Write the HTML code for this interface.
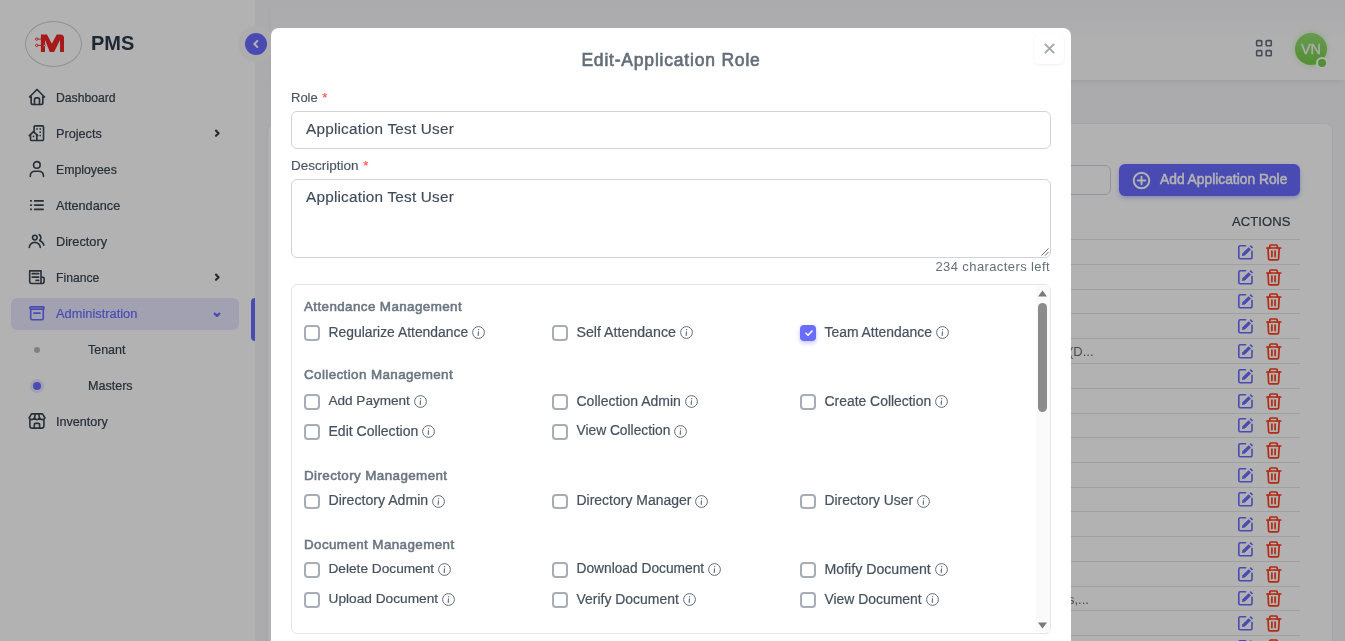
<!DOCTYPE html>
<html><head><meta charset="utf-8">
<style>
*{box-sizing:border-box;margin:0;padding:0}
html,body{width:1345px;height:641px;overflow:hidden}
body{position:relative;background:#f5f5f9;font-family:"Liberation Sans",sans-serif;color:#384551}
#root{position:absolute;left:0;top:0;width:1345px;height:641px;overflow:hidden;will-change:transform;background:#f5f5f9}
.abs{position:absolute}
/* sidebar */
#side{left:0;top:0;width:255px;height:641px;background:#fff}
.logo{left:25px;top:21px;width:57px;height:46px;border:1px solid #d0d0d0;border-radius:50%}
.pms{left:91px;top:33px;font-size:20px;font-weight:bold;color:#2c3a4a;line-height:20px}
.mi{left:0;width:255px;height:32px;font-size:12.2px;color:#384551;line-height:32px;-webkit-text-stroke-width:0.2px}
.mi svg{position:absolute;left:27px;top:6px;width:20px;height:20px}
.mi span{position:absolute;left:56px;top:1px}
.mi .chev{position:absolute;left:212px;top:11px;width:10px;height:10px;stroke-width:2.2}
.act{left:11px;top:298px;width:228px;height:32px;border-radius:6px;background:rgba(105,108,255,0.16)}
/* navbar */
#nav{left:271px;top:0;width:1074px;height:80px;background:linear-gradient(#f5f5f9 0px,#f6f6f9 14px,#fcfcfd 40px);box-shadow:0 4px 6px -2px rgba(0,0,0,0.07)}
/* card */
#card{left:268px;top:124px;width:1064px;height:560px;background:#fff;border-radius:6px;box-shadow:0 0 2px rgba(0,0,0,0.12)}
#overlay{left:0;top:0;width:1345px;height:641px;background:rgba(0,0,0,0.3)}
/* modal */
#modal{left:271px;top:28px;width:800px;height:700px;background:#fff;border-radius:8px}
.lbl{font-size:13px;color:#4a5562;line-height:16px;-webkit-text-stroke-width:0.15px}
.req{color:#ff4d49;margin-left:1px}
.inp{border:1px solid #d0d4d9;border-radius:6px;background:#fff}
.inptxt{font-size:15.3px;letter-spacing:0.22px;color:#3f4b59;line-height:18px;-webkit-text-stroke-width:0.15px}
.sec{font-size:13.4px;font-weight:normal;color:#6a7581;line-height:16px;-webkit-text-stroke-width:0.55px;letter-spacing:0.4px}
.cb{width:16px;height:15.6px;border:2px solid #a6adb5;border-radius:4px;background:#fff}
.cbl{font-size:14px;color:#45515e;line-height:16px;white-space:nowrap;-webkit-text-stroke-width:0.2px}
.info{display:inline-block;width:13px;height:13px;vertical-align:-2px;margin-left:3px}
</style></head>
<body>
<div id="root">
<div id="side" class="abs">
  <div class="abs logo"></div>
  <svg class="abs" style="left:34px;top:33px" width="32" height="21" viewBox="0 0 32 21">
    <path d="M6.9 1.5H13L17.9 10.8L22.7 1.5H26.5Q30 1.5 30 5V19.1H26V7L20.1 19.1H15.8L11 7V19.1H6.9Z" fill="#f02626"/>
    <path d="M3.6 6.1H7.5M3.6 12.4H9.5" stroke="#f02626" stroke-width="0.9"/>
    <circle cx="2.7" cy="6.1" r="1.2" fill="none" stroke="#f02626" stroke-width="0.9"/>
    <circle cx="2.7" cy="12.4" r="1.2" fill="none" stroke="#f02626" stroke-width="0.9"/>
    <circle cx="10.4" cy="12.4" r="1" fill="#fff" stroke="#f02626" stroke-width="0.7"/>
  </svg>
  <div class="abs pms">PMS</div>

  <div class="abs act"></div>
  <div class="abs" style="left:251px;top:298px;width:4px;height:43px;background:#696cff;border-radius:4px 0 0 4px"></div>

  <div class="abs mi" style="top:81px">
    <svg viewBox="0 0 24 24" fill="none" stroke="#384551" stroke-width="2" stroke-linecap="round" stroke-linejoin="round"><path d="M5 12H3l9-9 9 9h-2"/><path d="M5 12v7a2 2 0 0 0 2 2h10a2 2 0 0 0 2-2v-7"/><path d="M9 21v-6a2 2 0 0 1 2-2h2a2 2 0 0 1 2 2v6"/></svg>
    <span>Dashboard</span></div>
  <div class="abs mi" style="top:117px">
    <svg viewBox="0 0 20 20" fill="none" stroke="#384551" stroke-width="1.6" stroke-linecap="round" stroke-linejoin="round"><path d="M7.1 8.8V3.9Q7.1 2.9 8.1 2.9H15.5Q16.5 2.9 16.5 3.9V16.5Q16.5 17.5 15.5 17.5H4.5Q3.5 17.5 3.5 16.5V12.4"/><path d="M2.3 12.6L6.5 8.6L10.7 12.6"/><path d="M9.8 12V17.3"/><path d="M10 5.9h.01M13.2 5.9h.01M13.2 9.2h.01M13.2 12.6h.01M6.5 13.4h.01" stroke-width="1.7"/></svg>
    <span style="font-size:12.7px">Projects</span>
    <svg class="chev" viewBox="0 0 10 10" fill="none" stroke="#384551" stroke-width="2" stroke-linecap="round" stroke-linejoin="round"><path d="M4 2.6l2.6 2.6-2.6 2.6"/></svg></div>
  <div class="abs mi" style="top:153px">
    <svg viewBox="0 0 20 20" fill="none" stroke="#384551" stroke-width="1.6" stroke-linecap="round" stroke-linejoin="round"><circle cx="9.85" cy="5.95" r="3.3"/><path d="M3.3 17.5V16.9Q3.3 12.2 8.2 12.2H11.5Q16.5 12.2 16.5 16.9V17.5"/></svg>
    <span style="font-size:12.3px">Employees</span></div>
  <div class="abs mi" style="top:189px">
    <svg viewBox="0 0 20 20" fill="none" stroke="#384551" stroke-width="1.6" stroke-linecap="round" stroke-linejoin="round"><path d="M7.7 5.9H16.1M7.7 10.1H16.1M7.7 14.4H16.1" stroke-width="1.7"/><path d="M4 5.9h.01M4 10.1h.01M4 14.4h.01" stroke-width="1.8" stroke-linecap="square"/></svg>
    <span style="font-size:12.7px">Attendance</span></div>
  <div class="abs mi" style="top:225px">
    <svg viewBox="0 0 20 20" fill="none" stroke="#384551" stroke-width="1.6" stroke-linecap="round" stroke-linejoin="round"><circle cx="7.85" cy="6.6" r="2.3"/><path d="M2.3 16.5A5.5 5.1 0 0 1 13.3 16.5"/><path d="M12.4 3.6Q15.3 6.6 12.6 9.5Q16.2 11 16.8 14.2"/></svg>
    <span style="font-size:12.75px">Directory</span></div>
  <div class="abs mi" style="top:261px">
    <svg viewBox="0 0 20 20" fill="none" stroke="#384551" stroke-width="1.6" stroke-linecap="round" stroke-linejoin="round"><path d="M14 16.5V3.9H2.7V14.5Q2.7 16.5 4.7 16.5H15.1Q17.1 16.5 17.1 14.5V11.2Q17.1 10.2 16.1 10.2H14"/><path d="M5.3 6.7H11.6M5.3 10.2H11.6M9.2 13.4H11.6" stroke-width="1.7"/></svg>
    <span style="font-size:12.2px">Finance</span>
    <svg class="chev" viewBox="0 0 10 10" fill="none" stroke="#384551" stroke-width="2" stroke-linecap="round" stroke-linejoin="round"><path d="M4 2.6l2.6 2.6-2.6 2.6"/></svg></div>
  <div class="abs mi" style="top:297px;color:#696cff">
    <svg viewBox="0 0 20 20" fill="none" stroke="#696cff" stroke-width="1.6" stroke-linecap="round" stroke-linejoin="round"><path d="M2.9 4.9Q2.9 3.9 3.9 3.9H16.1Q17.1 3.9 17.1 4.9V5.1Q17.1 6.1 16.1 6.1H3.9Q2.9 6.1 2.9 5.1Z"/><path d="M3.7 6.1V15.2Q3.7 16.7 5.2 16.7H14.8Q16.3 16.7 16.3 15.2V6.1"/><path d="M6.9 10.2H13" stroke-width="1.7"/></svg>
    <span style="font-size:12.85px">Administration</span>
    <svg class="chev" viewBox="0 0 10 10" fill="none" stroke="#696cff" stroke-width="2.1" stroke-linecap="round" stroke-linejoin="round"><path d="M2.7 5.6l2.3 2.3 2.3-2.3"/></svg></div>
  <div class="abs" style="left:34px;top:347px;width:6px;height:6px;border-radius:50%;background:#b7b7b7"></div>
  <div class="abs mi" style="top:333px"><span style="left:88px;font-size:12.45px">Tenant</span></div>
  <div class="abs" style="left:30px;top:379px;width:14px;height:14px;border-radius:50%;background:rgba(105,108,255,0.16)"></div>
  <div class="abs" style="left:33px;top:382px;width:8px;height:8px;border-radius:50%;background:#696cff"></div>
  <div class="abs mi" style="top:369px"><span style="left:88px;font-size:12.55px">Masters</span></div>
  <div class="abs mi" style="top:405px">
    <svg viewBox="0 0 20 20" fill="none" stroke="#384551" stroke-width="1.6" stroke-linecap="round" stroke-linejoin="round"><path d="M4.5 2.9H15.5L18 7Q15.2 10.3 12.5 7Q10 10.3 7.5 7Q4.8 10.3 2.1 7Z"/><path d="M7.5 7L8.3 2.9M12.5 7L11.7 2.9"/><path d="M2.9 8.8V15.1Q2.9 17.1 4.9 17.1H14.9Q16.9 17.1 16.9 15.1V8.8"/><path d="M7.3 17.1V13.4Q7.3 12.4 8.3 12.4H11.6Q12.6 12.4 12.6 13.4V17.1"/></svg>
    <span style="font-size:12.6px">Inventory</span></div>
</div>

<div id="nav" class="abs"></div>
<!-- toggle -->
<div class="abs" style="left:238px;top:26px;width:36px;height:36px;border-radius:50%;background:#f8f8fa"></div>
<div class="abs" style="left:245px;top:33px;width:22px;height:22px;border-radius:50%;background:#696cff"></div>
<svg class="abs" style="left:250px;top:38px" width="12" height="12" viewBox="0 0 12 12" fill="none" stroke="#fff" stroke-width="2" stroke-linecap="round" stroke-linejoin="round"><path d="M7.3 3l-3 3 3 3"/></svg>

<!-- grid icon -->
<svg class="abs" style="left:1255px;top:39px" width="18" height="19" viewBox="0 0 18 19" fill="none" stroke="#646e78" stroke-width="1.6"><rect x="1.65" y="1.65" width="5.1" height="5.1" rx="0.8"/><rect x="11.15" y="1.65" width="5.1" height="5.1" rx="0.8"/><rect x="1.65" y="11.65" width="5.1" height="5.1" rx="0.8"/><rect x="11.15" y="11.65" width="5.1" height="5.1" rx="0.8"/></svg>
<div class="abs" style="left:1295px;top:33px;width:32px;height:32px;border-radius:50%;background:linear-gradient(#94dc72,#76cc48);color:#f4f4f4;font-size:14.5px;line-height:32px;text-align:center;-webkit-text-stroke-width:0.4px;box-shadow:0 0 6px rgba(113,221,55,0.35)">VN</div>
<div class="abs" style="left:1316px;top:57px;width:12px;height:12px;border-radius:50%;background:#76cc48;border:2px solid #fff"></div>

<div id="card" class="abs">
  <div class="abs" style="left:752px;top:41px;width:91px;height:30px;border:1px solid #d1d5db;border-radius:6px;background:#fff"></div>
  <div class="abs" style="left:851px;top:40px;width:181px;height:32px;border-radius:6px;background:#696cff;box-shadow:0 2px 4px rgba(105,108,255,0.4)">
    <svg class="abs" style="left:13px;top:6.5px" width="19" height="19" viewBox="0 0 24 24" fill="none" stroke="#fff" stroke-width="2.5" stroke-linecap="round"><circle cx="12" cy="12" r="9.8"/><path d="M7.3 12h9.4M12 7.3v9.4"/></svg>
    <div class="abs" style="left:41px;top:8px;font-size:13.8px;font-weight:normal;-webkit-text-stroke-width:0.5px;color:#fff;line-height:16px;white-space:nowrap">Add Application Role</div>
  </div>
  <div class="abs" style="left:964px;top:90px;font-size:13px;color:#384551;line-height:16px;letter-spacing:0.1px;-webkit-text-stroke-width:0.2px">ACTIONS</div>
  <div class="abs" style="left:762px;top:115px;width:270px;height:1px;background:#e4e6e8"></div>
  <div class="abs" style="left:762px;top:140px;width:270px;height:1px;background:#e4e6e8"></div>
<div class="abs" style="left:762px;top:165px;width:270px;height:1px;background:#e4e6e8"></div>
<div class="abs" style="left:762px;top:189px;width:270px;height:1px;background:#e4e6e8"></div>
<div class="abs" style="left:762px;top:214px;width:270px;height:1px;background:#e4e6e8"></div>
<div class="abs" style="left:762px;top:239px;width:270px;height:1px;background:#e4e6e8"></div>
<div class="abs" style="left:762px;top:264px;width:270px;height:1px;background:#e4e6e8"></div>
<div class="abs" style="left:762px;top:289px;width:270px;height:1px;background:#e4e6e8"></div>
<div class="abs" style="left:762px;top:313px;width:270px;height:1px;background:#e4e6e8"></div>
<div class="abs" style="left:762px;top:338px;width:270px;height:1px;background:#e4e6e8"></div>
<div class="abs" style="left:762px;top:363px;width:270px;height:1px;background:#e4e6e8"></div>
<div class="abs" style="left:762px;top:387px;width:270px;height:1px;background:#e4e6e8"></div>
<div class="abs" style="left:762px;top:412px;width:270px;height:1px;background:#e4e6e8"></div>
<div class="abs" style="left:762px;top:437px;width:270px;height:1px;background:#e4e6e8"></div>
<div class="abs" style="left:762px;top:462px;width:270px;height:1px;background:#e4e6e8"></div>
<div class="abs" style="left:762px;top:486px;width:270px;height:1px;background:#e4e6e8"></div>
<div class="abs" style="left:762px;top:511px;width:270px;height:1px;background:#e4e6e8"></div>
<svg class="abs" style="left:970px;top:120px" width="16" height="16" viewBox="0 0 16 16"><path d="M7.6 1.7H2.3a1.5 1.5 0 0 0-1.5 1.5V13.3a1.5 1.5 0 0 0 1.5 1.5H12.5a1.5 1.5 0 0 0 1.5-1.5V7.3" fill="none" stroke="#696cff" stroke-width="1.6" stroke-linecap="round"/><path d="M3.9 12L4.5 9.3L10.6 3.3L13 5.6L6.9 11.6Z" fill="#696cff"/><path d="M11.6 2.3L12.8 1.1L15.1 3.4L13.9 4.6Z" fill="#696cff"/></svg>
<svg class="abs" style="left:997px;top:120px" width="17" height="17" viewBox="0 0 17 17" fill="none" stroke="#ff3e1d" stroke-width="1.7" stroke-linecap="round" stroke-linejoin="round"><path d="M1.8 4h14"/><path d="M3 4.2l0.6 10.6a1.2 1.2 0 0 0 1.2 1.1h7.6a1.2 1.2 0 0 0 1.2-1.1l0.6-10.6"/><path d="M4.8 4V1.9a0.9 0.9 0 0 1 0.9-0.9h5.6a0.9 0.9 0 0 1 0.9 0.9V4"/><path d="M6.9 7v5.6M10.1 7v5.6"/></svg>
<svg class="abs" style="left:970px;top:145px" width="16" height="16" viewBox="0 0 16 16"><path d="M7.6 1.7H2.3a1.5 1.5 0 0 0-1.5 1.5V13.3a1.5 1.5 0 0 0 1.5 1.5H12.5a1.5 1.5 0 0 0 1.5-1.5V7.3" fill="none" stroke="#696cff" stroke-width="1.6" stroke-linecap="round"/><path d="M3.9 12L4.5 9.3L10.6 3.3L13 5.6L6.9 11.6Z" fill="#696cff"/><path d="M11.6 2.3L12.8 1.1L15.1 3.4L13.9 4.6Z" fill="#696cff"/></svg>
<svg class="abs" style="left:997px;top:145px" width="17" height="17" viewBox="0 0 17 17" fill="none" stroke="#ff3e1d" stroke-width="1.7" stroke-linecap="round" stroke-linejoin="round"><path d="M1.8 4h14"/><path d="M3 4.2l0.6 10.6a1.2 1.2 0 0 0 1.2 1.1h7.6a1.2 1.2 0 0 0 1.2-1.1l0.6-10.6"/><path d="M4.8 4V1.9a0.9 0.9 0 0 1 0.9-0.9h5.6a0.9 0.9 0 0 1 0.9 0.9V4"/><path d="M6.9 7v5.6M10.1 7v5.6"/></svg>
<svg class="abs" style="left:970px;top:169px" width="16" height="16" viewBox="0 0 16 16"><path d="M7.6 1.7H2.3a1.5 1.5 0 0 0-1.5 1.5V13.3a1.5 1.5 0 0 0 1.5 1.5H12.5a1.5 1.5 0 0 0 1.5-1.5V7.3" fill="none" stroke="#696cff" stroke-width="1.6" stroke-linecap="round"/><path d="M3.9 12L4.5 9.3L10.6 3.3L13 5.6L6.9 11.6Z" fill="#696cff"/><path d="M11.6 2.3L12.8 1.1L15.1 3.4L13.9 4.6Z" fill="#696cff"/></svg>
<svg class="abs" style="left:997px;top:169px" width="17" height="17" viewBox="0 0 17 17" fill="none" stroke="#ff3e1d" stroke-width="1.7" stroke-linecap="round" stroke-linejoin="round"><path d="M1.8 4h14"/><path d="M3 4.2l0.6 10.6a1.2 1.2 0 0 0 1.2 1.1h7.6a1.2 1.2 0 0 0 1.2-1.1l0.6-10.6"/><path d="M4.8 4V1.9a0.9 0.9 0 0 1 0.9-0.9h5.6a0.9 0.9 0 0 1 0.9 0.9V4"/><path d="M6.9 7v5.6M10.1 7v5.6"/></svg>
<svg class="abs" style="left:970px;top:194px" width="16" height="16" viewBox="0 0 16 16"><path d="M7.6 1.7H2.3a1.5 1.5 0 0 0-1.5 1.5V13.3a1.5 1.5 0 0 0 1.5 1.5H12.5a1.5 1.5 0 0 0 1.5-1.5V7.3" fill="none" stroke="#696cff" stroke-width="1.6" stroke-linecap="round"/><path d="M3.9 12L4.5 9.3L10.6 3.3L13 5.6L6.9 11.6Z" fill="#696cff"/><path d="M11.6 2.3L12.8 1.1L15.1 3.4L13.9 4.6Z" fill="#696cff"/></svg>
<svg class="abs" style="left:997px;top:194px" width="17" height="17" viewBox="0 0 17 17" fill="none" stroke="#ff3e1d" stroke-width="1.7" stroke-linecap="round" stroke-linejoin="round"><path d="M1.8 4h14"/><path d="M3 4.2l0.6 10.6a1.2 1.2 0 0 0 1.2 1.1h7.6a1.2 1.2 0 0 0 1.2-1.1l0.6-10.6"/><path d="M4.8 4V1.9a0.9 0.9 0 0 1 0.9-0.9h5.6a0.9 0.9 0 0 1 0.9 0.9V4"/><path d="M6.9 7v5.6M10.1 7v5.6"/></svg>
<svg class="abs" style="left:970px;top:219px" width="16" height="16" viewBox="0 0 16 16"><path d="M7.6 1.7H2.3a1.5 1.5 0 0 0-1.5 1.5V13.3a1.5 1.5 0 0 0 1.5 1.5H12.5a1.5 1.5 0 0 0 1.5-1.5V7.3" fill="none" stroke="#696cff" stroke-width="1.6" stroke-linecap="round"/><path d="M3.9 12L4.5 9.3L10.6 3.3L13 5.6L6.9 11.6Z" fill="#696cff"/><path d="M11.6 2.3L12.8 1.1L15.1 3.4L13.9 4.6Z" fill="#696cff"/></svg>
<svg class="abs" style="left:997px;top:219px" width="17" height="17" viewBox="0 0 17 17" fill="none" stroke="#ff3e1d" stroke-width="1.7" stroke-linecap="round" stroke-linejoin="round"><path d="M1.8 4h14"/><path d="M3 4.2l0.6 10.6a1.2 1.2 0 0 0 1.2 1.1h7.6a1.2 1.2 0 0 0 1.2-1.1l0.6-10.6"/><path d="M4.8 4V1.9a0.9 0.9 0 0 1 0.9-0.9h5.6a0.9 0.9 0 0 1 0.9 0.9V4"/><path d="M6.9 7v5.6M10.1 7v5.6"/></svg>
<svg class="abs" style="left:970px;top:244px" width="16" height="16" viewBox="0 0 16 16"><path d="M7.6 1.7H2.3a1.5 1.5 0 0 0-1.5 1.5V13.3a1.5 1.5 0 0 0 1.5 1.5H12.5a1.5 1.5 0 0 0 1.5-1.5V7.3" fill="none" stroke="#696cff" stroke-width="1.6" stroke-linecap="round"/><path d="M3.9 12L4.5 9.3L10.6 3.3L13 5.6L6.9 11.6Z" fill="#696cff"/><path d="M11.6 2.3L12.8 1.1L15.1 3.4L13.9 4.6Z" fill="#696cff"/></svg>
<svg class="abs" style="left:997px;top:244px" width="17" height="17" viewBox="0 0 17 17" fill="none" stroke="#ff3e1d" stroke-width="1.7" stroke-linecap="round" stroke-linejoin="round"><path d="M1.8 4h14"/><path d="M3 4.2l0.6 10.6a1.2 1.2 0 0 0 1.2 1.1h7.6a1.2 1.2 0 0 0 1.2-1.1l0.6-10.6"/><path d="M4.8 4V1.9a0.9 0.9 0 0 1 0.9-0.9h5.6a0.9 0.9 0 0 1 0.9 0.9V4"/><path d="M6.9 7v5.6M10.1 7v5.6"/></svg>
<svg class="abs" style="left:970px;top:269px" width="16" height="16" viewBox="0 0 16 16"><path d="M7.6 1.7H2.3a1.5 1.5 0 0 0-1.5 1.5V13.3a1.5 1.5 0 0 0 1.5 1.5H12.5a1.5 1.5 0 0 0 1.5-1.5V7.3" fill="none" stroke="#696cff" stroke-width="1.6" stroke-linecap="round"/><path d="M3.9 12L4.5 9.3L10.6 3.3L13 5.6L6.9 11.6Z" fill="#696cff"/><path d="M11.6 2.3L12.8 1.1L15.1 3.4L13.9 4.6Z" fill="#696cff"/></svg>
<svg class="abs" style="left:997px;top:269px" width="17" height="17" viewBox="0 0 17 17" fill="none" stroke="#ff3e1d" stroke-width="1.7" stroke-linecap="round" stroke-linejoin="round"><path d="M1.8 4h14"/><path d="M3 4.2l0.6 10.6a1.2 1.2 0 0 0 1.2 1.1h7.6a1.2 1.2 0 0 0 1.2-1.1l0.6-10.6"/><path d="M4.8 4V1.9a0.9 0.9 0 0 1 0.9-0.9h5.6a0.9 0.9 0 0 1 0.9 0.9V4"/><path d="M6.9 7v5.6M10.1 7v5.6"/></svg>
<svg class="abs" style="left:970px;top:293px" width="16" height="16" viewBox="0 0 16 16"><path d="M7.6 1.7H2.3a1.5 1.5 0 0 0-1.5 1.5V13.3a1.5 1.5 0 0 0 1.5 1.5H12.5a1.5 1.5 0 0 0 1.5-1.5V7.3" fill="none" stroke="#696cff" stroke-width="1.6" stroke-linecap="round"/><path d="M3.9 12L4.5 9.3L10.6 3.3L13 5.6L6.9 11.6Z" fill="#696cff"/><path d="M11.6 2.3L12.8 1.1L15.1 3.4L13.9 4.6Z" fill="#696cff"/></svg>
<svg class="abs" style="left:997px;top:293px" width="17" height="17" viewBox="0 0 17 17" fill="none" stroke="#ff3e1d" stroke-width="1.7" stroke-linecap="round" stroke-linejoin="round"><path d="M1.8 4h14"/><path d="M3 4.2l0.6 10.6a1.2 1.2 0 0 0 1.2 1.1h7.6a1.2 1.2 0 0 0 1.2-1.1l0.6-10.6"/><path d="M4.8 4V1.9a0.9 0.9 0 0 1 0.9-0.9h5.6a0.9 0.9 0 0 1 0.9 0.9V4"/><path d="M6.9 7v5.6M10.1 7v5.6"/></svg>
<svg class="abs" style="left:970px;top:318px" width="16" height="16" viewBox="0 0 16 16"><path d="M7.6 1.7H2.3a1.5 1.5 0 0 0-1.5 1.5V13.3a1.5 1.5 0 0 0 1.5 1.5H12.5a1.5 1.5 0 0 0 1.5-1.5V7.3" fill="none" stroke="#696cff" stroke-width="1.6" stroke-linecap="round"/><path d="M3.9 12L4.5 9.3L10.6 3.3L13 5.6L6.9 11.6Z" fill="#696cff"/><path d="M11.6 2.3L12.8 1.1L15.1 3.4L13.9 4.6Z" fill="#696cff"/></svg>
<svg class="abs" style="left:997px;top:318px" width="17" height="17" viewBox="0 0 17 17" fill="none" stroke="#ff3e1d" stroke-width="1.7" stroke-linecap="round" stroke-linejoin="round"><path d="M1.8 4h14"/><path d="M3 4.2l0.6 10.6a1.2 1.2 0 0 0 1.2 1.1h7.6a1.2 1.2 0 0 0 1.2-1.1l0.6-10.6"/><path d="M4.8 4V1.9a0.9 0.9 0 0 1 0.9-0.9h5.6a0.9 0.9 0 0 1 0.9 0.9V4"/><path d="M6.9 7v5.6M10.1 7v5.6"/></svg>
<svg class="abs" style="left:970px;top:343px" width="16" height="16" viewBox="0 0 16 16"><path d="M7.6 1.7H2.3a1.5 1.5 0 0 0-1.5 1.5V13.3a1.5 1.5 0 0 0 1.5 1.5H12.5a1.5 1.5 0 0 0 1.5-1.5V7.3" fill="none" stroke="#696cff" stroke-width="1.6" stroke-linecap="round"/><path d="M3.9 12L4.5 9.3L10.6 3.3L13 5.6L6.9 11.6Z" fill="#696cff"/><path d="M11.6 2.3L12.8 1.1L15.1 3.4L13.9 4.6Z" fill="#696cff"/></svg>
<svg class="abs" style="left:997px;top:343px" width="17" height="17" viewBox="0 0 17 17" fill="none" stroke="#ff3e1d" stroke-width="1.7" stroke-linecap="round" stroke-linejoin="round"><path d="M1.8 4h14"/><path d="M3 4.2l0.6 10.6a1.2 1.2 0 0 0 1.2 1.1h7.6a1.2 1.2 0 0 0 1.2-1.1l0.6-10.6"/><path d="M4.8 4V1.9a0.9 0.9 0 0 1 0.9-0.9h5.6a0.9 0.9 0 0 1 0.9 0.9V4"/><path d="M6.9 7v5.6M10.1 7v5.6"/></svg>
<svg class="abs" style="left:970px;top:367px" width="16" height="16" viewBox="0 0 16 16"><path d="M7.6 1.7H2.3a1.5 1.5 0 0 0-1.5 1.5V13.3a1.5 1.5 0 0 0 1.5 1.5H12.5a1.5 1.5 0 0 0 1.5-1.5V7.3" fill="none" stroke="#696cff" stroke-width="1.6" stroke-linecap="round"/><path d="M3.9 12L4.5 9.3L10.6 3.3L13 5.6L6.9 11.6Z" fill="#696cff"/><path d="M11.6 2.3L12.8 1.1L15.1 3.4L13.9 4.6Z" fill="#696cff"/></svg>
<svg class="abs" style="left:997px;top:367px" width="17" height="17" viewBox="0 0 17 17" fill="none" stroke="#ff3e1d" stroke-width="1.7" stroke-linecap="round" stroke-linejoin="round"><path d="M1.8 4h14"/><path d="M3 4.2l0.6 10.6a1.2 1.2 0 0 0 1.2 1.1h7.6a1.2 1.2 0 0 0 1.2-1.1l0.6-10.6"/><path d="M4.8 4V1.9a0.9 0.9 0 0 1 0.9-0.9h5.6a0.9 0.9 0 0 1 0.9 0.9V4"/><path d="M6.9 7v5.6M10.1 7v5.6"/></svg>
<svg class="abs" style="left:970px;top:392px" width="16" height="16" viewBox="0 0 16 16"><path d="M7.6 1.7H2.3a1.5 1.5 0 0 0-1.5 1.5V13.3a1.5 1.5 0 0 0 1.5 1.5H12.5a1.5 1.5 0 0 0 1.5-1.5V7.3" fill="none" stroke="#696cff" stroke-width="1.6" stroke-linecap="round"/><path d="M3.9 12L4.5 9.3L10.6 3.3L13 5.6L6.9 11.6Z" fill="#696cff"/><path d="M11.6 2.3L12.8 1.1L15.1 3.4L13.9 4.6Z" fill="#696cff"/></svg>
<svg class="abs" style="left:997px;top:392px" width="17" height="17" viewBox="0 0 17 17" fill="none" stroke="#ff3e1d" stroke-width="1.7" stroke-linecap="round" stroke-linejoin="round"><path d="M1.8 4h14"/><path d="M3 4.2l0.6 10.6a1.2 1.2 0 0 0 1.2 1.1h7.6a1.2 1.2 0 0 0 1.2-1.1l0.6-10.6"/><path d="M4.8 4V1.9a0.9 0.9 0 0 1 0.9-0.9h5.6a0.9 0.9 0 0 1 0.9 0.9V4"/><path d="M6.9 7v5.6M10.1 7v5.6"/></svg>
<svg class="abs" style="left:970px;top:417px" width="16" height="16" viewBox="0 0 16 16"><path d="M7.6 1.7H2.3a1.5 1.5 0 0 0-1.5 1.5V13.3a1.5 1.5 0 0 0 1.5 1.5H12.5a1.5 1.5 0 0 0 1.5-1.5V7.3" fill="none" stroke="#696cff" stroke-width="1.6" stroke-linecap="round"/><path d="M3.9 12L4.5 9.3L10.6 3.3L13 5.6L6.9 11.6Z" fill="#696cff"/><path d="M11.6 2.3L12.8 1.1L15.1 3.4L13.9 4.6Z" fill="#696cff"/></svg>
<svg class="abs" style="left:997px;top:417px" width="17" height="17" viewBox="0 0 17 17" fill="none" stroke="#ff3e1d" stroke-width="1.7" stroke-linecap="round" stroke-linejoin="round"><path d="M1.8 4h14"/><path d="M3 4.2l0.6 10.6a1.2 1.2 0 0 0 1.2 1.1h7.6a1.2 1.2 0 0 0 1.2-1.1l0.6-10.6"/><path d="M4.8 4V1.9a0.9 0.9 0 0 1 0.9-0.9h5.6a0.9 0.9 0 0 1 0.9 0.9V4"/><path d="M6.9 7v5.6M10.1 7v5.6"/></svg>
<svg class="abs" style="left:970px;top:442px" width="16" height="16" viewBox="0 0 16 16"><path d="M7.6 1.7H2.3a1.5 1.5 0 0 0-1.5 1.5V13.3a1.5 1.5 0 0 0 1.5 1.5H12.5a1.5 1.5 0 0 0 1.5-1.5V7.3" fill="none" stroke="#696cff" stroke-width="1.6" stroke-linecap="round"/><path d="M3.9 12L4.5 9.3L10.6 3.3L13 5.6L6.9 11.6Z" fill="#696cff"/><path d="M11.6 2.3L12.8 1.1L15.1 3.4L13.9 4.6Z" fill="#696cff"/></svg>
<svg class="abs" style="left:997px;top:442px" width="17" height="17" viewBox="0 0 17 17" fill="none" stroke="#ff3e1d" stroke-width="1.7" stroke-linecap="round" stroke-linejoin="round"><path d="M1.8 4h14"/><path d="M3 4.2l0.6 10.6a1.2 1.2 0 0 0 1.2 1.1h7.6a1.2 1.2 0 0 0 1.2-1.1l0.6-10.6"/><path d="M4.8 4V1.9a0.9 0.9 0 0 1 0.9-0.9h5.6a0.9 0.9 0 0 1 0.9 0.9V4"/><path d="M6.9 7v5.6M10.1 7v5.6"/></svg>
<svg class="abs" style="left:970px;top:466px" width="16" height="16" viewBox="0 0 16 16"><path d="M7.6 1.7H2.3a1.5 1.5 0 0 0-1.5 1.5V13.3a1.5 1.5 0 0 0 1.5 1.5H12.5a1.5 1.5 0 0 0 1.5-1.5V7.3" fill="none" stroke="#696cff" stroke-width="1.6" stroke-linecap="round"/><path d="M3.9 12L4.5 9.3L10.6 3.3L13 5.6L6.9 11.6Z" fill="#696cff"/><path d="M11.6 2.3L12.8 1.1L15.1 3.4L13.9 4.6Z" fill="#696cff"/></svg>
<svg class="abs" style="left:997px;top:466px" width="17" height="17" viewBox="0 0 17 17" fill="none" stroke="#ff3e1d" stroke-width="1.7" stroke-linecap="round" stroke-linejoin="round"><path d="M1.8 4h14"/><path d="M3 4.2l0.6 10.6a1.2 1.2 0 0 0 1.2 1.1h7.6a1.2 1.2 0 0 0 1.2-1.1l0.6-10.6"/><path d="M4.8 4V1.9a0.9 0.9 0 0 1 0.9-0.9h5.6a0.9 0.9 0 0 1 0.9 0.9V4"/><path d="M6.9 7v5.6M10.1 7v5.6"/></svg>
<svg class="abs" style="left:970px;top:491px" width="16" height="16" viewBox="0 0 16 16"><path d="M7.6 1.7H2.3a1.5 1.5 0 0 0-1.5 1.5V13.3a1.5 1.5 0 0 0 1.5 1.5H12.5a1.5 1.5 0 0 0 1.5-1.5V7.3" fill="none" stroke="#696cff" stroke-width="1.6" stroke-linecap="round"/><path d="M3.9 12L4.5 9.3L10.6 3.3L13 5.6L6.9 11.6Z" fill="#696cff"/><path d="M11.6 2.3L12.8 1.1L15.1 3.4L13.9 4.6Z" fill="#696cff"/></svg>
<svg class="abs" style="left:997px;top:491px" width="17" height="17" viewBox="0 0 17 17" fill="none" stroke="#ff3e1d" stroke-width="1.7" stroke-linecap="round" stroke-linejoin="round"><path d="M1.8 4h14"/><path d="M3 4.2l0.6 10.6a1.2 1.2 0 0 0 1.2 1.1h7.6a1.2 1.2 0 0 0 1.2-1.1l0.6-10.6"/><path d="M4.8 4V1.9a0.9 0.9 0 0 1 0.9-0.9h5.6a0.9 0.9 0 0 1 0.9 0.9V4"/><path d="M6.9 7v5.6M10.1 7v5.6"/></svg>
<svg class="abs" style="left:970px;top:515px" width="16" height="16" viewBox="0 0 16 16"><path d="M7.6 1.7H2.3a1.5 1.5 0 0 0-1.5 1.5V13.3a1.5 1.5 0 0 0 1.5 1.5H12.5a1.5 1.5 0 0 0 1.5-1.5V7.3" fill="none" stroke="#696cff" stroke-width="1.6" stroke-linecap="round"/><path d="M3.9 12L4.5 9.3L10.6 3.3L13 5.6L6.9 11.6Z" fill="#696cff"/><path d="M11.6 2.3L12.8 1.1L15.1 3.4L13.9 4.6Z" fill="#696cff"/></svg>
<svg class="abs" style="left:997px;top:515px" width="17" height="17" viewBox="0 0 17 17" fill="none" stroke="#ff3e1d" stroke-width="1.7" stroke-linecap="round" stroke-linejoin="round"><path d="M1.8 4h14"/><path d="M3 4.2l0.6 10.6a1.2 1.2 0 0 0 1.2 1.1h7.6a1.2 1.2 0 0 0 1.2-1.1l0.6-10.6"/><path d="M4.8 4V1.9a0.9 0.9 0 0 1 0.9-0.9h5.6a0.9 0.9 0 0 1 0.9 0.9V4"/><path d="M6.9 7v5.6M10.1 7v5.6"/></svg>
<div class="abs" style="left:801px;top:220px;font-size:13px;color:#646e78;line-height:16px">(D...</div>
<div class="abs" style="left:800px;top:468px;font-size:13px;color:#646e78;line-height:16px">s,...</div>
</div>

<div id="overlay" class="abs"></div>

<div id="modal" class="abs">
  <div class="abs" style="left:0;top:22px;width:800px;text-align:center;font-size:17.5px;font-weight:normal;color:#646e78;line-height:20px;-webkit-text-stroke-width:0.65px;letter-spacing:0.8px;padding-left:0px">Edit-Application Role</div>
  <div class="abs" style="left:763px;top:6px;width:30px;height:30px;border-radius:6px;background:#fff;box-shadow:0 1px 3px rgba(0,0,0,0.07)">
    <svg class="abs" style="left:10px;top:9px" width="11" height="11" viewBox="0 0 11 11" stroke="#a0a7ae" stroke-width="1.9"><path d="M0.8 0.8l9.4 9.4M10.2 0.8l-9.4 9.4"/></svg>
  </div>
  <div class="abs lbl" style="left:20px;top:62px">Role <span class="req">*</span></div>
  <div class="abs inp" style="left:20px;top:83px;width:760px;height:38px"></div>
  <div class="abs inptxt" style="left:35px;top:92px">Application Test User</div>
  <div class="abs lbl" style="left:20px;top:130px"><span style="font-size:13.5px">Description</span> <span class="req">*</span></div>
  <div class="abs inp" style="left:20px;top:151px;width:760px;height:79px"></div>
  <div class="abs inptxt" style="left:35px;top:160px">Application Test User</div>
  <svg class="abs" style="left:769px;top:219px" width="9" height="9" viewBox="0 0 9 9" stroke="#5a5a5a" stroke-width="0.9"><path d="M1.5 8.5L8.5 1.5M5 8.5L8.5 5"/></svg>
  <div class="abs" style="left:520px;top:231px;width:259px;text-align:right;font-size:13px;color:#646e78;line-height:16px;letter-spacing:0.4px">234 characters left</div>
</div>
<div class="abs" style="left:291px;top:284px;width:760px;height:350px;border:1px solid #e4e6e8;border-radius:6px;background:#fff"></div>
<div class="abs sec" style="left:304px;top:299px">Attendance Management</div>
<div class="abs cb" style="left:304px;top:325.2px"></div>
<div class="abs cbl" style="left:328.50px;top:324px;font-size:13.88px">Regularize Attendance</div>
<svg class="abs" style="left:472.0px;top:326.0px" width="13" height="13" viewBox="0 0 13 13" fill="none" stroke="#5f6b77"><circle cx="6.5" cy="6.5" r="5.9" stroke-width="1"/><circle cx="6.6" cy="3.7" r="0.65" fill="#5f6b77" stroke="none"/><path d="M6.5 5.8L6.2 9.4" stroke-width="1.15" stroke-linecap="round"/></svg>
<div class="abs cb" style="left:552px;top:325.2px"></div>
<div class="abs cbl" style="left:576.50px;top:324px;font-size:14.19px">Self Attendance</div>
<svg class="abs" style="left:679.7px;top:326.0px" width="13" height="13" viewBox="0 0 13 13" fill="none" stroke="#5f6b77"><circle cx="6.5" cy="6.5" r="5.9" stroke-width="1"/><circle cx="6.6" cy="3.7" r="0.65" fill="#5f6b77" stroke="none"/><path d="M6.5 5.8L6.2 9.4" stroke-width="1.15" stroke-linecap="round"/></svg>
<div class="abs" style="left:800px;top:325px;width:16px;height:16px;border-radius:4px;background:#696cff;box-shadow:0 2px 4px rgba(105,108,255,0.4)"><svg class="abs" style="left:3.5px;top:3px" width="10" height="10" viewBox="0 0 10 10" fill="none" stroke="#fff" stroke-width="1.6" stroke-linecap="round" stroke-linejoin="round"><path d="M2 5.2l2 2 4-4.2"/></svg></div>
<div class="abs cbl" style="left:824.50px;top:324px;font-size:13.92px">Team Attendance</div>
<svg class="abs" style="left:935.9px;top:326.0px" width="13" height="13" viewBox="0 0 13 13" fill="none" stroke="#5f6b77"><circle cx="6.5" cy="6.5" r="5.9" stroke-width="1"/><circle cx="6.6" cy="3.7" r="0.65" fill="#5f6b77" stroke="none"/><path d="M6.5 5.8L6.2 9.4" stroke-width="1.15" stroke-linecap="round"/></svg>
<div class="abs sec" style="left:304px;top:367px">Collection Management</div>
<div class="abs cb" style="left:304px;top:394.2px"></div>
<div class="abs cbl" style="left:328.50px;top:393px;font-size:13.56px">Add Payment</div>
<svg class="abs" style="left:413.7px;top:395.0px" width="13" height="13" viewBox="0 0 13 13" fill="none" stroke="#5f6b77"><circle cx="6.5" cy="6.5" r="5.9" stroke-width="1"/><circle cx="6.6" cy="3.7" r="0.65" fill="#5f6b77" stroke="none"/><path d="M6.5 5.8L6.2 9.4" stroke-width="1.15" stroke-linecap="round"/></svg>
<div class="abs cb" style="left:552px;top:394.2px"></div>
<div class="abs cbl" style="left:576.50px;top:393px;font-size:14.02px">Collection Admin</div>
<svg class="abs" style="left:684.7px;top:395.0px" width="13" height="13" viewBox="0 0 13 13" fill="none" stroke="#5f6b77"><circle cx="6.5" cy="6.5" r="5.9" stroke-width="1"/><circle cx="6.6" cy="3.7" r="0.65" fill="#5f6b77" stroke="none"/><path d="M6.5 5.8L6.2 9.4" stroke-width="1.15" stroke-linecap="round"/></svg>
<div class="abs cb" style="left:800px;top:394.2px"></div>
<div class="abs cbl" style="left:824.50px;top:393px;font-size:13.91px">Create Collection</div>
<svg class="abs" style="left:935.0px;top:395.0px" width="13" height="13" viewBox="0 0 13 13" fill="none" stroke="#5f6b77"><circle cx="6.5" cy="6.5" r="5.9" stroke-width="1"/><circle cx="6.6" cy="3.7" r="0.65" fill="#5f6b77" stroke="none"/><path d="M6.5 5.8L6.2 9.4" stroke-width="1.15" stroke-linecap="round"/></svg>
<div class="abs cb" style="left:304px;top:424.2px"></div>
<div class="abs cbl" style="left:328.50px;top:423px;font-size:14.05px">Edit Collection</div>
<svg class="abs" style="left:422.1px;top:425.0px" width="13" height="13" viewBox="0 0 13 13" fill="none" stroke="#5f6b77"><circle cx="6.5" cy="6.5" r="5.9" stroke-width="1"/><circle cx="6.6" cy="3.7" r="0.65" fill="#5f6b77" stroke="none"/><path d="M6.5 5.8L6.2 9.4" stroke-width="1.15" stroke-linecap="round"/></svg>
<div class="abs cb" style="left:552px;top:424.2px"></div>
<div class="abs cbl" style="left:576.50px;top:423px;font-size:13.77px">View Collection</div>
<svg class="abs" style="left:674.2px;top:425.0px" width="13" height="13" viewBox="0 0 13 13" fill="none" stroke="#5f6b77"><circle cx="6.5" cy="6.5" r="5.9" stroke-width="1"/><circle cx="6.6" cy="3.7" r="0.65" fill="#5f6b77" stroke="none"/><path d="M6.5 5.8L6.2 9.4" stroke-width="1.15" stroke-linecap="round"/></svg>
<div class="abs sec" style="left:304px;top:468px">Directory Management</div>
<div class="abs cb" style="left:304px;top:493.8px"></div>
<div class="abs cbl" style="left:328.50px;top:492px;font-size:14.13px">Directory Admin</div>
<svg class="abs" style="left:432.0px;top:494.6px" width="13" height="13" viewBox="0 0 13 13" fill="none" stroke="#5f6b77"><circle cx="6.5" cy="6.5" r="5.9" stroke-width="1"/><circle cx="6.6" cy="3.7" r="0.65" fill="#5f6b77" stroke="none"/><path d="M6.5 5.8L6.2 9.4" stroke-width="1.15" stroke-linecap="round"/></svg>
<div class="abs cb" style="left:552px;top:493.8px"></div>
<div class="abs cbl" style="left:576.50px;top:492px;font-size:13.97px">Directory Manager</div>
<svg class="abs" style="left:695.2px;top:494.6px" width="13" height="13" viewBox="0 0 13 13" fill="none" stroke="#5f6b77"><circle cx="6.5" cy="6.5" r="5.9" stroke-width="1"/><circle cx="6.6" cy="3.7" r="0.65" fill="#5f6b77" stroke="none"/><path d="M6.5 5.8L6.2 9.4" stroke-width="1.15" stroke-linecap="round"/></svg>
<div class="abs cb" style="left:800px;top:493.8px"></div>
<div class="abs cbl" style="left:824.50px;top:492px;font-size:13.87px">Directory User</div>
<svg class="abs" style="left:916.9px;top:494.6px" width="13" height="13" viewBox="0 0 13 13" fill="none" stroke="#5f6b77"><circle cx="6.5" cy="6.5" r="5.9" stroke-width="1"/><circle cx="6.6" cy="3.7" r="0.65" fill="#5f6b77" stroke="none"/><path d="M6.5 5.8L6.2 9.4" stroke-width="1.15" stroke-linecap="round"/></svg>
<div class="abs sec" style="left:304px;top:537px">Document Management</div>
<div class="abs cb" style="left:304px;top:562.3px"></div>
<div class="abs cbl" style="left:328.50px;top:561px;font-size:13.68px">Delete Document</div>
<svg class="abs" style="left:438.0px;top:563.1px" width="13" height="13" viewBox="0 0 13 13" fill="none" stroke="#5f6b77"><circle cx="6.5" cy="6.5" r="5.9" stroke-width="1"/><circle cx="6.6" cy="3.7" r="0.65" fill="#5f6b77" stroke="none"/><path d="M6.5 5.8L6.2 9.4" stroke-width="1.15" stroke-linecap="round"/></svg>
<div class="abs cb" style="left:552px;top:562.3px"></div>
<div class="abs cbl" style="left:576.50px;top:561px;font-size:13.76px">Download Document</div>
<svg class="abs" style="left:708.0px;top:563.1px" width="13" height="13" viewBox="0 0 13 13" fill="none" stroke="#5f6b77"><circle cx="6.5" cy="6.5" r="5.9" stroke-width="1"/><circle cx="6.6" cy="3.7" r="0.65" fill="#5f6b77" stroke="none"/><path d="M6.5 5.8L6.2 9.4" stroke-width="1.15" stroke-linecap="round"/></svg>
<div class="abs cb" style="left:800px;top:562.3px"></div>
<div class="abs cbl" style="left:824.50px;top:561px;font-size:14.16px">Mofify Document</div>
<svg class="abs" style="left:934.5px;top:563.1px" width="13" height="13" viewBox="0 0 13 13" fill="none" stroke="#5f6b77"><circle cx="6.5" cy="6.5" r="5.9" stroke-width="1"/><circle cx="6.6" cy="3.7" r="0.65" fill="#5f6b77" stroke="none"/><path d="M6.5 5.8L6.2 9.4" stroke-width="1.15" stroke-linecap="round"/></svg>
<div class="abs cb" style="left:304px;top:592.0px"></div>
<div class="abs cbl" style="left:328.50px;top:591px;font-size:13.70px">Upload Document</div>
<svg class="abs" style="left:442.0px;top:592.8px" width="13" height="13" viewBox="0 0 13 13" fill="none" stroke="#5f6b77"><circle cx="6.5" cy="6.5" r="5.9" stroke-width="1"/><circle cx="6.6" cy="3.7" r="0.65" fill="#5f6b77" stroke="none"/><path d="M6.5 5.8L6.2 9.4" stroke-width="1.15" stroke-linecap="round"/></svg>
<div class="abs cb" style="left:552px;top:592.0px"></div>
<div class="abs cbl" style="left:576.50px;top:591px;font-size:13.94px">Verify Document</div>
<svg class="abs" style="left:682.6px;top:592.8px" width="13" height="13" viewBox="0 0 13 13" fill="none" stroke="#5f6b77"><circle cx="6.5" cy="6.5" r="5.9" stroke-width="1"/><circle cx="6.6" cy="3.7" r="0.65" fill="#5f6b77" stroke="none"/><path d="M6.5 5.8L6.2 9.4" stroke-width="1.15" stroke-linecap="round"/></svg>
<div class="abs cb" style="left:800px;top:592.0px"></div>
<div class="abs cbl" style="left:824.50px;top:591px;font-size:13.92px">View Document</div>
<svg class="abs" style="left:925.5px;top:592.8px" width="13" height="13" viewBox="0 0 13 13" fill="none" stroke="#5f6b77"><circle cx="6.5" cy="6.5" r="5.9" stroke-width="1"/><circle cx="6.6" cy="3.7" r="0.65" fill="#5f6b77" stroke="none"/><path d="M6.5 5.8L6.2 9.4" stroke-width="1.15" stroke-linecap="round"/></svg>
<div class="abs" style="left:1036px;top:285px;width:14px;height:347px;background:#fafafa"></div>
<div class="abs" style="left:1038px;top:303px;width:9px;height:109px;border-radius:5px;background:#8c8c8c"></div>
<svg class="abs" style="left:1037px;top:288px" width="11" height="10" viewBox="0 0 11 10"><path d="M1 8.5h9L5.5 2.5z" fill="#7a7a7a"/></svg>
<svg class="abs" style="left:1037px;top:620px" width="11" height="10" viewBox="0 0 11 10"><path d="M1 2.5h9L5.5 8.5z" fill="#7a7a7a"/></svg>
</div>
</body></html>
